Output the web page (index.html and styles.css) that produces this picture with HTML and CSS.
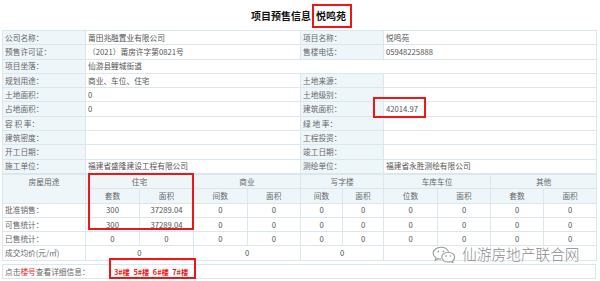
FILE: index.html
```html
<!DOCTYPE html>
<html lang="zh-CN">
<head>
<meta charset="utf-8">
<title>项目预售信息</title>
<link rel="stylesheet" href="styles.css">
</head>
<body>
<div class="page">
  <div class="title">项目预售信息<span class="title-hl">悦鸣苑</span></div>

  <table class="info">
    <colgroup><col class="c-lab"><col class="c-val"><col class="c-lab"><col class="c-val2"></colgroup>
    <tr><td class="lab">公司名称：</td><td>莆田兆融置业有限公司</td><td class="lab">项目名称：</td><td>悦鸣苑</td></tr>
    <tr><td class="lab">预售许可证：</td><td>（2021）莆房许字第0821号</td><td class="lab">售楼电话：</td><td>05948225888</td></tr>
    <tr><td class="lab">项目坐落：</td><td colspan="3">仙游县鲤城街道</td></tr>
    <tr><td class="lab">规划用途：</td><td>商业、车位、住宅</td><td class="lab">土地来源：</td><td></td></tr>
    <tr><td class="lab">土地面积：</td><td>0</td><td class="lab">土地级别：</td><td></td></tr>
    <tr><td class="lab">占地面积：</td><td>0</td><td class="lab">建筑面积：</td><td>42014.97</td></tr>
    <tr><td class="lab">容 积 率：</td><td></td><td class="lab">绿 地 率：</td><td></td></tr>
    <tr><td class="lab">建筑密度：</td><td></td><td class="lab">工程投资：</td><td></td></tr>
    <tr><td class="lab">开工日期：</td><td></td><td class="lab">竣工日期：</td><td></td></tr>
    <tr><td class="lab">施工单位：</td><td>福建省盛隆建设工程有限公司</td><td class="lab">测绘单位：</td><td>福建省永胜测绘有限公司</td></tr>
  </table>

  <table class="stats">
    <colgroup>
      <col class="s0"><col class="s1"><col class="s1"><col class="s2"><col class="s2"><col class="s3"><col class="s4"><col class="s1"><col class="s5"><col class="s5"><col class="s5">
    </colgroup>
    <tr class="hd">
      <td class="lab head-lab" rowspan="2">房屋用途</td>
      <td colspan="2">住宅</td><td colspan="2">商业</td><td colspan="2">写字楼</td><td colspan="2">车库车位</td><td colspan="2">其他</td>
    </tr>
    <tr class="hd">
      <td>套数</td><td>面积</td><td>间数</td><td>面积</td><td>间数</td><td>面积</td><td>位数</td><td>面积</td><td>套数</td><td>面积</td>
    </tr>
    <tr><td class="rlab">批准销售：</td><td>300</td><td>37289.04</td><td>0</td><td>0</td><td>0</td><td>0</td><td>0</td><td>0</td><td>0</td><td>0</td></tr>
    <tr><td class="rlab">可售统计：</td><td>300</td><td>37289.04</td><td>0</td><td>0</td><td>0</td><td>0</td><td>0</td><td>0</td><td>0</td><td>0</td></tr>
    <tr><td class="rlab">已售统计：</td><td>0</td><td>0</td><td>0</td><td>0</td><td>0</td><td>0</td><td>0</td><td>0</td><td>0</td><td>0</td></tr>
    <tr><td class="rlab">成交均价(元/㎡)</td><td colspan="2">0</td><td colspan="2">0</td><td colspan="2">0</td><td colspan="2"></td><td colspan="2"></td></tr>
  </table>

  <div class="links">
    <span class="links-lab">点击<span class="red">楼号</span>查看详细信息：</span>
    <span class="bld">3#楼</span><span class="bld">5#楼</span><span class="bld">6#楼</span><span class="bld">7#楼</span>
  </div>

  <div class="mark mark-area"></div>
  <div class="mark mark-house"></div>
  <div class="mark mark-links"></div>

  <div class="watermark">
    <svg class="wm-icon" width="24" height="17" viewBox="0 0 24 17">
      <path d="M9 1.2C4.6 1.2 1.2 3.9 1.2 7.2c0 1.9 1.1 3.5 2.8 4.6l-0.8 2.4 2.9-1.5c0.9 0.3 1.9 0.4 2.9 0.4" fill="none" stroke="#9a9a9a" stroke-width="1.1"/>
      <path d="M16.6 5.6C15.5 3 12.5 1.2 9 1.2" fill="none" stroke="#9a9a9a" stroke-width="1.1"/>
      <circle cx="6.3" cy="5.4" r="0.9" fill="#9a9a9a"/>
      <circle cx="11.4" cy="5.4" r="0.9" fill="#9a9a9a"/>
      <path d="M16.2 6.2c3.6 0 6.4 2.2 6.4 5 0 1.5-0.8 2.8-2.1 3.7l0.6 1.8-2.3-1.1c-0.8 0.2-1.7 0.4-2.6 0.4-3.6 0-6.4-2.2-6.4-4.9s2.8-4.9 6.4-4.9z" fill="#fff" stroke="#9a9a9a" stroke-width="1.1"/>
      <circle cx="14" cy="10" r="0.8" fill="#9a9a9a"/>
      <circle cx="18.4" cy="10" r="0.8" fill="#9a9a9a"/>
    </svg>
    <span class="wm-text">仙游房地产联合网</span>
  </div>
</div>
</body>
</html>
```

FILE: styles.css
```css
html, body {
  margin: 0;
  padding: 0;
  background: #fff;
}
body {
  font-family: "Noto Sans CJK SC", "Liberation Sans", sans-serif;
  font-size: 7.7px;
  color: #555;
}
.page {
  position: relative;
  width: 600px;
  height: 281px;
  overflow: hidden;
  padding: 0 4px 0 2px;
  box-sizing: border-box;
}
.title {
  height: 30px;
  padding-top: 2px;
  padding-left: 5px;
  box-sizing: border-box;
  display: flex;
  align-items: center;
  justify-content: center;
  font-size: 10px;
  line-height: 14px;
  font-weight: bold;
  color: #111;
}
.title-hl {
  border: 2px solid #f01616;
  padding: 3px 4px 3px 2px;
  margin-left: 1px;
}
table {
  width: 594px;
  border-collapse: collapse;
  table-layout: fixed;
}
td {
  border: 1px solid #dae8ee;
  padding: 0 2px;
  line-height: 1;
  height: 13.3px;
  white-space: nowrap;
  overflow: hidden;
  color: #555;
}
.info td { text-align: left; }
.lab {
  background: #eef6fa;
  color: #666;
}
.c-lab { width: 83px; }
.c-val { width: 215px; }
.c-val2 { width: 213px; }

.stats td { text-align: center; }
.stats .rlab {
  text-align: left;
  color: #666;
}
.stats .hd td {
  background: #eef6fa;
  color: #666;
}
.stats .head-lab {
  vertical-align: top;
  padding-top: 3px;
}
.s0 { width: 83px; }
.s1 { width: 54px; }
.s2 { width: 53.5px; }
.s3 { width: 42px; }
.s4 { width: 41px; }
.s5 { width: 53px; }

.links {
  margin-top: 3.5px;
  width: 594px;
  box-sizing: border-box;
  height: 15px;
  border: 1px solid #dae8ee;
  display: flex;
  align-items: center;
  padding-left: 2px;
  color: #666;
}
.links-lab {
  width: 109px;
  flex: none;
}
.red { color: #f01616; }
.bld {
  color: #f01616;
  font-weight: bold;
  font-size: 7.3px;
  margin-right: 3.5px;
}

.mark {
  position: absolute;
  border: 2px solid #f01616;
  box-sizing: border-box;
}
.mark-area { left: 373px; top: 97px; width: 53px; height: 21px; }
.mark-house { left: 88px; top: 173px; width: 106px; height: 57px; }
.mark-links { left: 109px; top: 258px; width: 87px; height: 21px; }

.watermark {
  position: absolute;
  left: 432px;
  top: 246px;
  display: flex;
  align-items: center;
  gap: 6px;
}
.wm-text {
  font-size: 14.7px;
  color: #8c8c8c;
  font-weight: 300;
  text-shadow: 0 0 2px #fff, 0 0 2px #fff;
  line-height: 1;
}
```
